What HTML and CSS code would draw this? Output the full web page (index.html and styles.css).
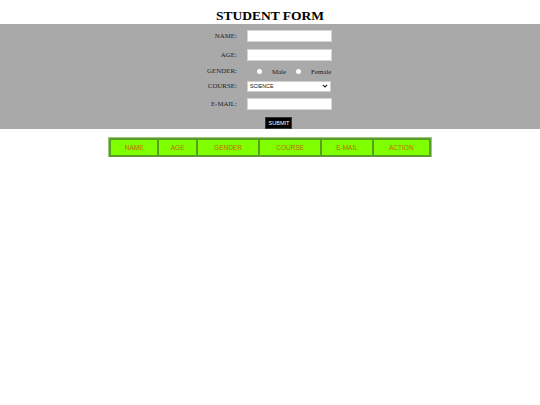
FILE: index.html
```html
<!DOCTYPE html>
<html>
<head>
<meta charset="utf-8">
<link rel="stylesheet" href="styles.css">
</head>
<body>
<h1 class="title">STUDENT FORM</h1>
<div class="band">
  <form class="form">
    <label class="lbl">NAME:</label>
    <div class="field"><input class="txt" type="text"></div>
    <label class="lbl">AGE:</label>
    <div class="field"><input class="txt" type="text"></div>
    <label class="lbl">GENDER:</label>
    <div class="field radios">
      <span class="radio"></span><span class="opt">Male</span>
      <span class="radio"></span><span class="opt">Female</span>
    </div>
    <label class="lbl">COURSE:</label>
    <div class="field">
      <div class="select"><span>SCIENCE</span>
        <svg class="chev" width="6" height="4" viewBox="0 0 6 4"><path d="M0.8 0.8 L3 3 L5.2 0.8" fill="none" stroke="#222" stroke-width="1.1"/></svg>
      </div>
    </div>
    <label class="lbl">E-MAIL:</label>
    <div class="field"><input class="txt" type="text"></div>
    <div class="submit-row"><button type="button" class="submit">SUBMIT</button></div>
  </form>
</div>
<div class="table-wrap">
  <table class="tbl">
    <tr>
      <th class="c1">NAME</th>
      <th class="c2">AGE</th>
      <th class="c3">GENDER</th>
      <th class="c4">COURSE</th>
      <th class="c5">E-MAIL</th>
      <th class="c6">ACTION</th>
    </tr>
  </table>
</div>
</body>
</html>
```

FILE: styles.css
```css
html, body {
  margin: 0;
  padding: 0;
  background: #fff;
}
body {
  font-family: "Liberation Serif", "Times New Roman", serif;
}
.title {
  margin: 0;
  height: 24px;
  padding-top: 8px;
  box-sizing: border-box;
  text-align: center;
  font-size: 13.5px;
  line-height: 16px;
  font-weight: bold;
  color: #000;
}
.band {
  background: #a9a9a9;
  height: 105px;
  box-sizing: border-box;
  padding-top: 3px;
  display: flex;
  justify-content: center;
}
.form {
  display: grid;
  grid-template-columns: auto 85px;
  grid-template-rows: 18px 20px 12px 18px 18px 16px;
  column-gap: 10px;
  margin-left: -1px;
}
.lbl {
  font-size: 6.9px;
  color: #222;
  text-align: right;
  align-self: center;
  line-height: 8px;
}
.field {
  display: flex;
  align-items: center;
}
.txt {
  margin: 0;
  width: 85px;
  height: 12px;
  box-sizing: border-box;
  border: 1px solid #d4d4d4;
  background: #fff;
  padding: 0;
}
.radios {
  font-size: 6.9px;
  color: #222;
  padding-left: 10px;
}
.radio {
  width: 5px;
  height: 5px;
  border-radius: 50%;
  background: #fff;
  display: inline-block;
  margin-right: 10px;
}
.opt {
  margin-right: 10px;
}
.opt:last-child { margin-right: 0; }
.select {
  width: 84px;
  height: 11px;
  box-sizing: border-box;
  border: 1px solid #cfcfcf;
  background: #fff;
  display: flex;
  align-items: center;
  justify-content: space-between;
  padding: 0 2px 0 2px;
  font-family: "Liberation Sans", Arial, sans-serif;
  font-size: 5.3px;
  color: #111;
}
.chev { display: block; }
.submit-row {
  grid-column: 1 / 3;
  display: flex;
  justify-content: center;
  align-items: flex-start;
  padding-top: 4px;
  padding-left: 19px;
}
.submit {
  margin: 0;
  width: 27px;
  height: 12px;
  padding: 0;
  border: 1px solid #333;
  background: #000;
  color: #fff;
  font-family: "Liberation Sans", Arial, sans-serif;
  font-size: 5.5px;
  line-height: 10px;
}
.table-wrap {
  display: flex;
  justify-content: center;
  padding-top: 9px;
}
.tbl {
  border-collapse: separate;
  border-spacing: 0;
  border: 1px solid #5f9a3a;
  box-shadow: 0 0 0 1px #9acb72;
  background: #7fff00;
  width: 322px;
  height: 19px;
}
.tbl th {
  font-family: "Liberation Sans", Arial, sans-serif;
  font-weight: normal;
  font-size: 6.5px;
  color: #c06a00;
  border: 1px solid #56a020;
  padding: 0;
  text-align: center;
}
.c1 { width: 47px; }
.c2 { width: 37px; }
.c3 { width: 61px; }
.c4 { width: 61px; }
.c5 { width: 50px; }
.c6 { width: 56px; }
```
